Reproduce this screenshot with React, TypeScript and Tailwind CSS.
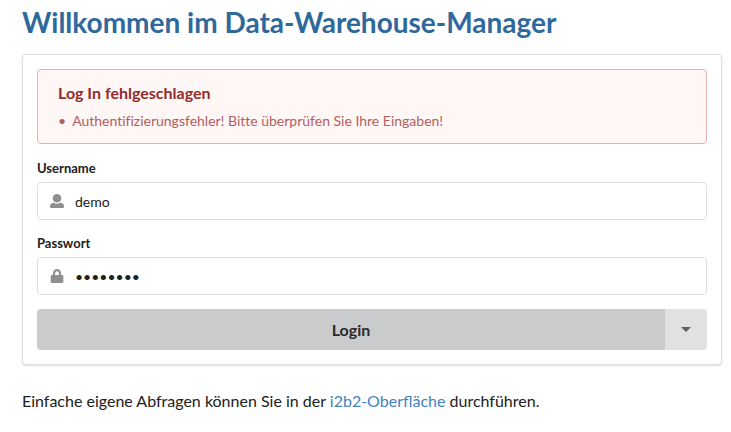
import React, { useState } from "react";

function UserIcon() {
  return (
    <svg viewBox="0 0 14 14" className="size-[14px] fill-[#8f8f8f]" aria-hidden="true">
      <circle cx="7" cy="4.3" r="4.3" />
      <path d="M3.6 8.8C1.5 9 0 10.3 0 12v.7C0 13.400.6 14 1.300 14h11.400c.7 0 1.300-.6 1.300-1.300V12c0-1.700-1.500-3-3.600-3.200-1 .7-2.100 1-3.400 1s-2.400-.3-3.400-1z" />
    </svg>
  );
}

function LockIcon() {
  return (
    <svg viewBox="0 0 14 14" className="size-[14px] fill-[#8f8f8f]" aria-hidden="true">
      <path d="M12 6h-.9V4.200a4.100 4.200 0 0 0-8.200 0V6H2A1.300 1.300 0 0 0 .7 7.300v5.400A1.300 1.300 0 0 0 2 14h10a1.300 1.300 0 0 0 1.300-1.300V7.300A1.300 1.300 0 0 0 12 6zM8.900 6H5.100V4.200a1.900 1.900 0 0 1 3.800 0z" />
    </svg>
  );
}

interface FieldProps {
  id: string;
  label: string;
  type: string;
  value: string;
  icon: React.ReactNode;
  onChange: (value: string) => void;
}

function Field({ id, label, type, value, icon, onChange }: FieldProps) {
  return (
    <div className="mb-[14px]">
      <label htmlFor={id} className="mb-1 block text-[13px] leading-[19px] font-bold">
        {label}
      </label>
      <div className="flex h-[38px] items-center rounded border border-[#dededf] bg-white">
        <span className="flex w-[37px] justify-center">{icon}</span>
        <input
          id={id}
          type={type}
          value={value}
          onChange={(event) => onChange(event.target.value)}
          className="h-full min-w-0 flex-1 bg-transparent text-[14px] outline-none"
        />
      </div>
    </div>
  );
}

export default function App() {
  const [username, setUsername] = useState("demo");
  const [password, setPassword] = useState("password");

  return (
    <main className="pr-[9px] pl-[22px] font-['Lato',sans-serif] text-[#212121]">
      <h1 className="pt-1 text-[28px] leading-9 font-bold text-[#2f689c]">
        Willkommen im Data-Warehouse-Manager
      </h1>
      <form
        onSubmit={(event) => event.preventDefault()}
        className="mt-[14px] rounded border border-[#dededf] bg-white p-[14px] shadow-[0_1px_2px_0_rgba(34,36,38,0.15)]"
      >
        <section role="alert" className="mb-[15px] rounded border border-[#e0b4b4] bg-[#fff6f6] px-5 pt-[13px] pb-3">
          <h2 className="text-[16px] leading-5 font-bold text-[#912d2b]">Log In fehlgeschlagen</h2>
          <ul className="mt-2 text-[14px] leading-5 text-[#b35e5d] [font-variant-ligatures:none]">
            <li className="flex gap-[6px]">
              <span aria-hidden="true">•</span>
              Authentifizierungsfehler! Bitte überprüfen Sie Ihre Eingaben!
            </li>
          </ul>
        </section>
        <Field id="username" label="Username" type="text" value={username} icon={<UserIcon />} onChange={setUsername} />
        <Field id="password" label="Passwort" type="password" value={password} icon={<LockIcon />} onChange={setPassword} />
        <div className="flex h-[41px] overflow-hidden rounded">
          <button type="submit" className="flex-1 bg-[#cacbcd] text-[16px] font-bold text-[#2a2b2c]">
            Login
          </button>
          <button type="button" aria-label="Weitere Optionen" className="flex w-[42px] items-center justify-center bg-[#e0e1e2]">
            <svg viewBox="0 0 10 5" className="h-[5px] w-[10px] fill-[#5f6061]" aria-hidden="true">
              <path d="M0 0h10L5 5z" />
            </svg>
          </button>
        </div>
      </form>
      <p className="py-6 text-[16px] leading-6">
        Einfache eigene Abfragen können Sie in der{" "}
        <a href="#i2b2" className="text-[#4183c4]">i2b2-Oberfläche</a> durchführen.
      </p>
    </main>
  );
}
